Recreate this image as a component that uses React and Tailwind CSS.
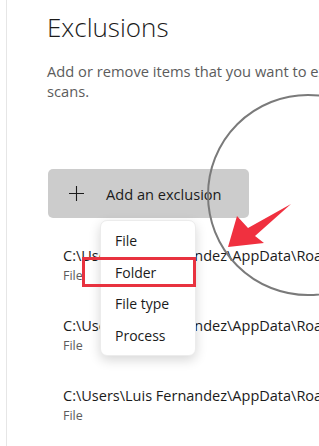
export default function App() {
  const font = { fontFamily: '"Open Sans", "Noto Sans", sans-serif' };
  const items = [0, 1, 2];
  return (
    <div className="relative w-[319px] h-[446px] overflow-hidden bg-white text-[#1b1b1b]" style={font}>
      <div className="ml-[6px] h-full border-l border-[#e6e6e6] pl-[40px] pt-[9px]">
        <h1 className="text-[26px] font-light leading-[36px] whitespace-nowrap">Exclusions</h1>
        <p className="mt-[16px] w-[600px] text-[14.7px] leading-[20px] text-[#5c5c5c]">
          Add or remove items that you want to exclude from Microsoft Defender Antivirus
          <br />
          scans.
        </p>
        <button className="mt-[68px] ml-px flex h-[49px] w-[201px] items-center rounded-[5px] bg-[#cccccc] pl-[21px]">
          <svg width="15" height="15" viewBox="0 0 15 15" className="shrink-0">
            <path d="M7.5 0v15M0 7.5h15" stroke="#1b1b1b" strokeWidth="1.1" fill="none" />
          </svg>
          <span className="ml-[22px] text-[14.6px] leading-[20px] whitespace-nowrap">Add an exclusion</span>
        </button>
        <div className="mt-[28px] flex flex-col gap-[31px] pl-[16px]">
          {items.map((i) => (
            <div key={i} className="flex flex-col whitespace-nowrap">
              <span className="text-[14.5px] leading-[20px]">C:\Users\Luis Fernandez\AppData\Roaming\Microsoft</span>
              <span className="text-[12.5px] leading-[19px] text-[#5c5c5c]">File</span>
            </div>
          ))}
        </div>
      </div>

      <div className="absolute left-[100px] top-[220px] flex h-[136px] w-[96px] flex-col rounded-[7px] bg-white py-[4px] shadow-[0_4px_12px_rgba(0,0,0,0.16)] border border-[#ececec]">
        {["File", "Folder", "File type", "Process"].map((t) => (
          <div key={t} className="flex h-[33px] items-center pl-[14px] text-[14px] text-[#1b1b1b]">{t}</div>
        ))}
      </div>

      <div className="absolute left-[82px] top-[257px] h-[30px] w-[114px] border-[3px] border-[#e8323f]" />

      <svg className="absolute left-0 top-0" width="319" height="446" viewBox="0 0 319 446">
        <circle cx="308" cy="195" r="100" fill="none" stroke="#7a7a7a" strokeWidth="2" />
        <polygon points="228,247 237,216 248,228 291,204 255,236 264,243" fill="#f0303f" />
      </svg>
    </div>
  );
}
